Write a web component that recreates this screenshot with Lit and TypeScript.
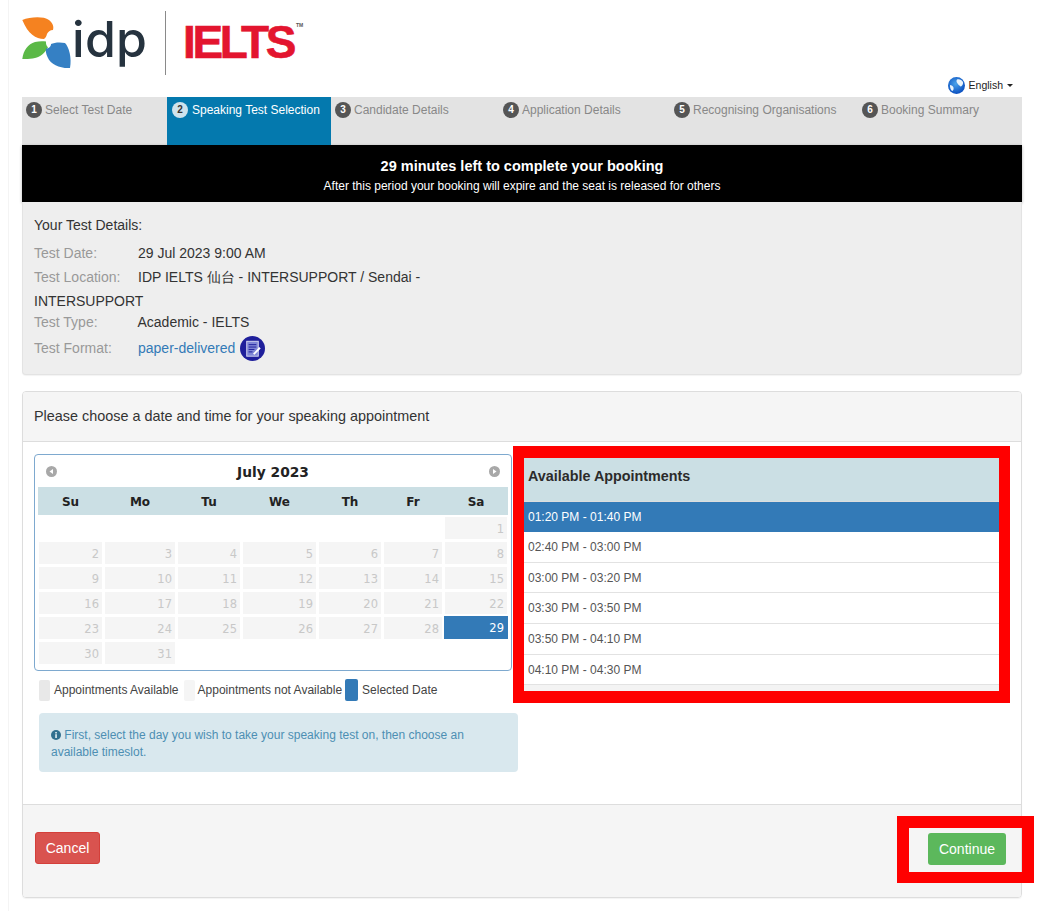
import { LitElement, html, css, svg } from "lit";
import { customElement } from "lit/decorators.js";

const DAYS = ["Su", "Mo", "Tu", "We", "Th", "Fr", "Sa"];
const STEPS = [
  "Select Test Date",
  "Speaking Test Selection",
  "Candidate Details",
  "Application Details",
  "Recognising Organisations",
  "Booking Summary",
];
const SLOTS = [
  "01:20 PM - 01:40 PM",
  "02:40 PM - 03:00 PM",
  "03:00 PM - 03:20 PM",
  "03:30 PM - 03:50 PM",
  "03:50 PM - 04:10 PM",
  "04:10 PM - 04:30 PM",
];

@customElement("app-root")
export class AppRoot extends LitElement {
  static styles = css`
    :host { display: block; font-family: "Liberation Sans", Arial, sans-serif; color: #333; font-size: 14px; background: #fff; }
    * { box-sizing: border-box; }
    .page { margin-left: 8px; border-left: 1px solid #f4f4f4; padding: 0 25px 14px 13px; height: 911px; }
    .brand { height: 76px; display: flex; align-items: flex-start; }
    .petals { width: 50px; height: 76px; flex: none; }
    .idp { font-family: Inter, sans-serif; font-weight: 500; font-size: 50px; line-height: 76px; height: 76px; color: #26333f; width: 93px; padding-top: 1px; letter-spacing: 0.3px; }
    .divider { width: 1px; height: 64px; margin-top: 11px; background: #8a8a8a; flex: none; }
    .ielts { font-weight: 700; font-size: 46px; line-height: 76px; height: 76px; color: #e3152f; margin-left: 17px; letter-spacing: -3.4px; -webkit-text-stroke: 0.6px #e3152f; padding-top: 4px; }
    .tm { font-size: 5px; font-weight: 700; color: #555; line-height: 76px; padding: 0 0 0 3px; margin-top: -13px; }
    .lang { height: 21px; display: flex; justify-content: flex-end; align-items: center; padding: 0 9px 3px 0; gap: 4px; font-size: 10.5px; color: #222; }
    .caret { width: 0; height: 0; border-left: 3px solid transparent; border-right: 3px solid transparent; border-top: 3px solid #222; }
    .steps { display: grid; grid-template-columns: 145px 164px 168px 171px 188px 164px; height: 48px; background: #e3e3e3; }
    .step { padding: 5px 4px; display: flex; align-items: flex-start; gap: 3px; font-size: 12px; line-height: 16px; color: #888; white-space: nowrap; }
    .step.on { background: #0479ae; color: #fff; padding-left: 5px; gap: 4px; }
    .badge { width: 16px; height: 16px; border-radius: 50%; background: #555; color: #fff; font-size: 10px; font-weight: 700; display: flex; align-items: center; justify-content: center; flex: none; }
    .step.on .badge { background: #cfe3ec; color: #333; }
    .banner { height: 57px; background: #000; color: #fff; text-align: center; padding-top: 12px; box-shadow: 0 1px 3px rgba(0,0,0,.3); }
    .banner b { display: block; font-size: 14.5px; line-height: 18px; }
    .banner span { display: block; font-size: 12px; line-height: 20px; margin-top: 1px; }
    .details { height: 173px; background: #eee; border: 1px solid #e3e3e3; border-top: none; border-radius: 0 0 4px 4px; padding: 13px 11px 0; line-height: 20px; box-shadow: 0 1px 1px rgba(0,0,0,.05); }
    .details h4 { margin: 0 0 6px; font-weight: 400; font-size: 14px; line-height: 20px; }
    .row { line-height: 24px; max-width: 400px; }
    .row.tight { line-height: 20px; margin-top: -1px; }
    .row.fmt { line-height: 26px; margin-top: 3px; display: flex; align-items: center; }
    .lbl { display: inline-block; width: 104px; color: #999; }
    .row.tight .lbl { width: 103.5px; }
    .link { color: #337ab7; }
    .fmticon { width: 25px; height: 25px; margin-left: 5px; }
    .panel { margin-top: 16px; height: 507px; border: 1px solid #ddd; border-radius: 4px; display: flex; flex-direction: column; box-shadow: 0 1px 1px rgba(0,0,0,.05); }
    .phead { height: 50px; background: #f5f5f5; border-bottom: 1px solid #ddd; padding: 0 11px 2px; display: flex; align-items: center; font-size: 14.4px; border-radius: 3px 3px 0 0; }
    .pbody { flex: 1; display: flex; padding-left: 11px; }
    .left { width: 484px; flex: none; padding-top: 12px; }
    .cal { width: 478px; height: 217px; border: 1px solid #7ea9cf; border-radius: 4px; padding: 0 3px; font-family: "DejaVu Sans", Verdana, sans-serif; }
    .calhead { height: 32px; display: flex; justify-content: space-between; align-items: center; padding: 2px 8px 0 8px; font-weight: 700; font-size: 13.8px; color: #222; }
    .arrow { width: 11px; height: 11px; margin-top: -2px; }
    .dow, .grid { display: grid; grid-template-columns: 63px 70px 62px 73px 62px 58px 62px; column-gap: 3px; padding: 0 0 0 1px; }
    .dow { background: #cbdfe4; height: 28px; align-items: center; text-align: center; font-weight: 700; font-size: 12px; color: #222; padding-top: 2px; }
    .grid { margin-top: 2px; grid-auto-rows: 22px; row-gap: 3px; }
    .d { background: #f5f5f5; color: #c8c8c8; text-align: right; padding-right: 3px; font-size: 11.5px; line-height: 24px; height: 22px; overflow: hidden; }
    .d.none { background: none; }
    .d.sel { background: #337ab7; color: #fff; margin: -1px -1px 0; height: 23px; padding-right: 4px; line-height: 25px; }
    .legend { display: flex; align-items: center; margin: 8px 0 0 5px; height: 22px; font-size: 12px; color: #444; white-space: nowrap; }
    .sw { height: 21px; flex: none; border-radius: 2px; }
    .sw.a { width: 11px; background: #e8e8e8; margin-right: 4px; }
    .sw.b { width: 11px; background: #f5f5f5; margin: 0 3px 0 5px; }
    .sw.c { width: 13px; height: 22px; background: #337ab7; margin: 0 4px 0 3px; }
    .alert { margin: 12px 0 0 5px; width: 479px; height: 59px; background: #d9e8ee; border-radius: 4px; padding: 14px 12px; font-size: 12px; line-height: 17px; color: #4d8fb3; }
    .alert svg { width: 10px; height: 10px; vertical-align: -1px; }
    .right { width: 497px; height: 257px; margin: 4px 0 0 -5px; border: solid #f00; border-width: 12px 11px 12px 11px; flex: none; overflow: hidden; background: #f3f3f3; }
    .thead { height: 44px; background: #cbdfe4; padding: 8px 4px 0; font-weight: 700; font-size: 14.35px; line-height: 20px; color: #2b2b2b; border-bottom: 1px solid #ddd; }
    .slot { height: 30.7px; background: #fff; padding-left: 4px; font-size: 12px; display: flex; align-items: center; color: #555; border-bottom: 1px solid #e2e2e2; }
    .slot.on { background: #337ab7; color: #fff; height: 30px; border-bottom: none; }
    .pfoot { height: 93px; background: #f5f5f5; border-top: 1px solid #ddd; display: flex; justify-content: space-between; align-items: flex-start; padding: 27px 0 0 12px; border-radius: 0 0 3px 3px; }
    .btn { height: 32px; border-radius: 3px; color: #fff; font-size: 14px; display: flex; align-items: center; justify-content: center; }
    .cancel { width: 65px; background: #d9534f; border: 1px solid #d43f3a; }
    .hl { margin: -16px -13px 0 0; width: 137px; height: 67px; border: solid #f00; border-width: 12px 12px 11px 12px; padding: 5px 16px 0 19px; flex: none; }
    .continue { width: 78px; background: #5cb85c; }
  `;

  private logoPetals() {
    return html`<svg class="petals" viewBox="22 0 50 76">
      <path fill="#f58220" d="M22.3 20 C30 17 43 16 49 20 C53 23 54 27 53 30 C50 30 48 32 47 34 C46.5 36 45.5 38 44 39 C36 39 28 34 22.3 20Z" />
      <path fill="#5bb947" d="M22.3 59 C23.5 50 28 44 35 42 C39 41 43 41 46 41.5 C45.7 44 46.5 46 48 47.2 C45 53 40 57 35 58 C31 59 26 59.3 22.3 59Z" />
      <path fill="#3580c4" d="M70 68 C60 68.5 51 65 47.5 57 C46 54 45.5 51 46 48.5 C49 48.5 51 46.5 51 44 C54 42.5 60 42 65 43 C69 47 72 58 70 68Z" />
    </svg>`;
  }

  private globe() {
    return html`<svg width="17" height="17" viewBox="0 0 17 17">
      <defs><radialGradient id="g" cx="45%" cy="40%" r="60%"><stop offset="0" stop-color="#4aa3ea" /><stop offset="1" stop-color="#0a4fc0" /></radialGradient></defs>
      <circle cx="8.5" cy="8.5" r="8.5" fill="url(#g)" />
      <path fill="#eaf4fb" d="M9 2.5 C11 1.5 14 3 15 5 C15.5 7 14 9.5 12.5 9.5 C11.5 8.5 10.5 8 9.5 6.5 C8.5 5.5 8 3.5 9 2.5Z M2 8 C3.5 8 5 9 5.5 10.5 C6 12.5 5 14 4 14 C2.5 12.5 1.8 10 2 8Z" />
    </svg>`;
  }

  private docIcon() {
    return html`<svg class="fmticon" viewBox="0 0 26 26">
      <circle cx="13" cy="13" r="13" fill="#1f1f9b" />
      <rect x="7" y="5.5" width="12" height="15.5" fill="#7f86d6" stroke="#d5d8f2" stroke-width="1" />
      <path d="M9 9h8M9 11.5h8M9 14h6M9 16.5h4" stroke="#1f1f9b" stroke-width="1" />
      <path d="M13.5 18.5 L20 11.5 L21.5 13 L15 19.5 Z" fill="#fff" />
    </svg>`;
  }

  private arrow(dir: "l" | "r") {
    const p = dir === "l" ? "M7 3 L3.5 5.5 L7 8Z" : "M4 3 L7.5 5.5 L4 8Z";
    return html`<svg class="arrow" viewBox="0 0 11 11"><circle cx="5.5" cy="5.5" r="5.5" fill="#a8a8a8" />${svg`<path d=${p} fill="#fff" />`}</svg>`;
  }

  render() {
    const cells: unknown[] = [];
    for (let i = 0; i < 6; i++) cells.push(html`<div class="d none"></div>`);
    for (let d = 1; d <= 31; d++) cells.push(html`<div class="d ${d === 29 ? "sel" : ""}">${d}</div>`);
    return html`<div class="page">
      <div class="brand">
        ${this.logoPetals()}
        <div class="idp">idp</div>
        <div class="divider"></div>
        <div class="ielts">IELTS</div>
        <div class="tm">TM</div>
      </div>
      <div class="lang">${this.globe()}<span>English</span><span class="caret"></span></div>
      <div class="steps">
        ${STEPS.map((s, i) => html`<div class="step ${i === 1 ? "on" : ""}"><span class="badge">${i + 1}</span><span>${s}</span></div>`)}
      </div>
      <div class="banner">
        <b>29 minutes left to complete your booking</b>
        <span>After this period your booking will expire and the seat is released for others</span>
      </div>
      <div class="details">
        <h4>Your Test Details:</h4>
        <div class="row"><span class="lbl">Test Date:</span>29 Jul 2023 9:00 AM</div>
        <div class="row"><span class="lbl">Test Location:</span>IDP IELTS 仙台 - INTERSUPPORT / Sendai - INTERSUPPORT</div>
        <div class="row tight"><span class="lbl">Test Type:</span>Academic - IELTS</div>
        <div class="row fmt"><span class="lbl">Test Format:</span><span class="link">paper-delivered</span>${this.docIcon()}</div>
      </div>
      <div class="panel">
        <div class="phead">Please choose a date and time for your speaking appointment</div>
        <div class="pbody">
          <div class="left">
            <div class="cal">
              <div class="calhead">${this.arrow("l")}<span>July 2023</span>${this.arrow("r")}</div>
              <div class="dow">${DAYS.map((d) => html`<span>${d}</span>`)}</div>
              <div class="grid">${cells}</div>
            </div>
            <div class="legend">
              <span class="sw a"></span>Appointments Available
              <span class="sw b"></span>Appointments not Available
              <span class="sw c"></span>Selected Date
            </div>
            <div class="alert">
              <svg viewBox="0 0 10 10"><circle cx="5" cy="5" r="5" fill="#31708f" /><rect x="4.2" y="4.2" width="1.7" height="3.8" fill="#d9e8ee" /><rect x="4.2" y="2" width="1.7" height="1.5" fill="#d9e8ee" /></svg>
              First, select the day you wish to take your speaking test on, then choose an available timeslot.
            </div>
          </div>
          <div class="right">
            <div class="thead">Available Appointments</div>
            ${SLOTS.map((s, i) => html`<div class="slot ${i === 0 ? "on" : ""}">${s}</div>`)}
          </div>
        </div>
        <div class="pfoot">
          <div class="btn cancel">Cancel</div>
          <div class="hl"><div class="btn continue">Continue</div></div>
        </div>
      </div>
    </div>`;
  }
}
